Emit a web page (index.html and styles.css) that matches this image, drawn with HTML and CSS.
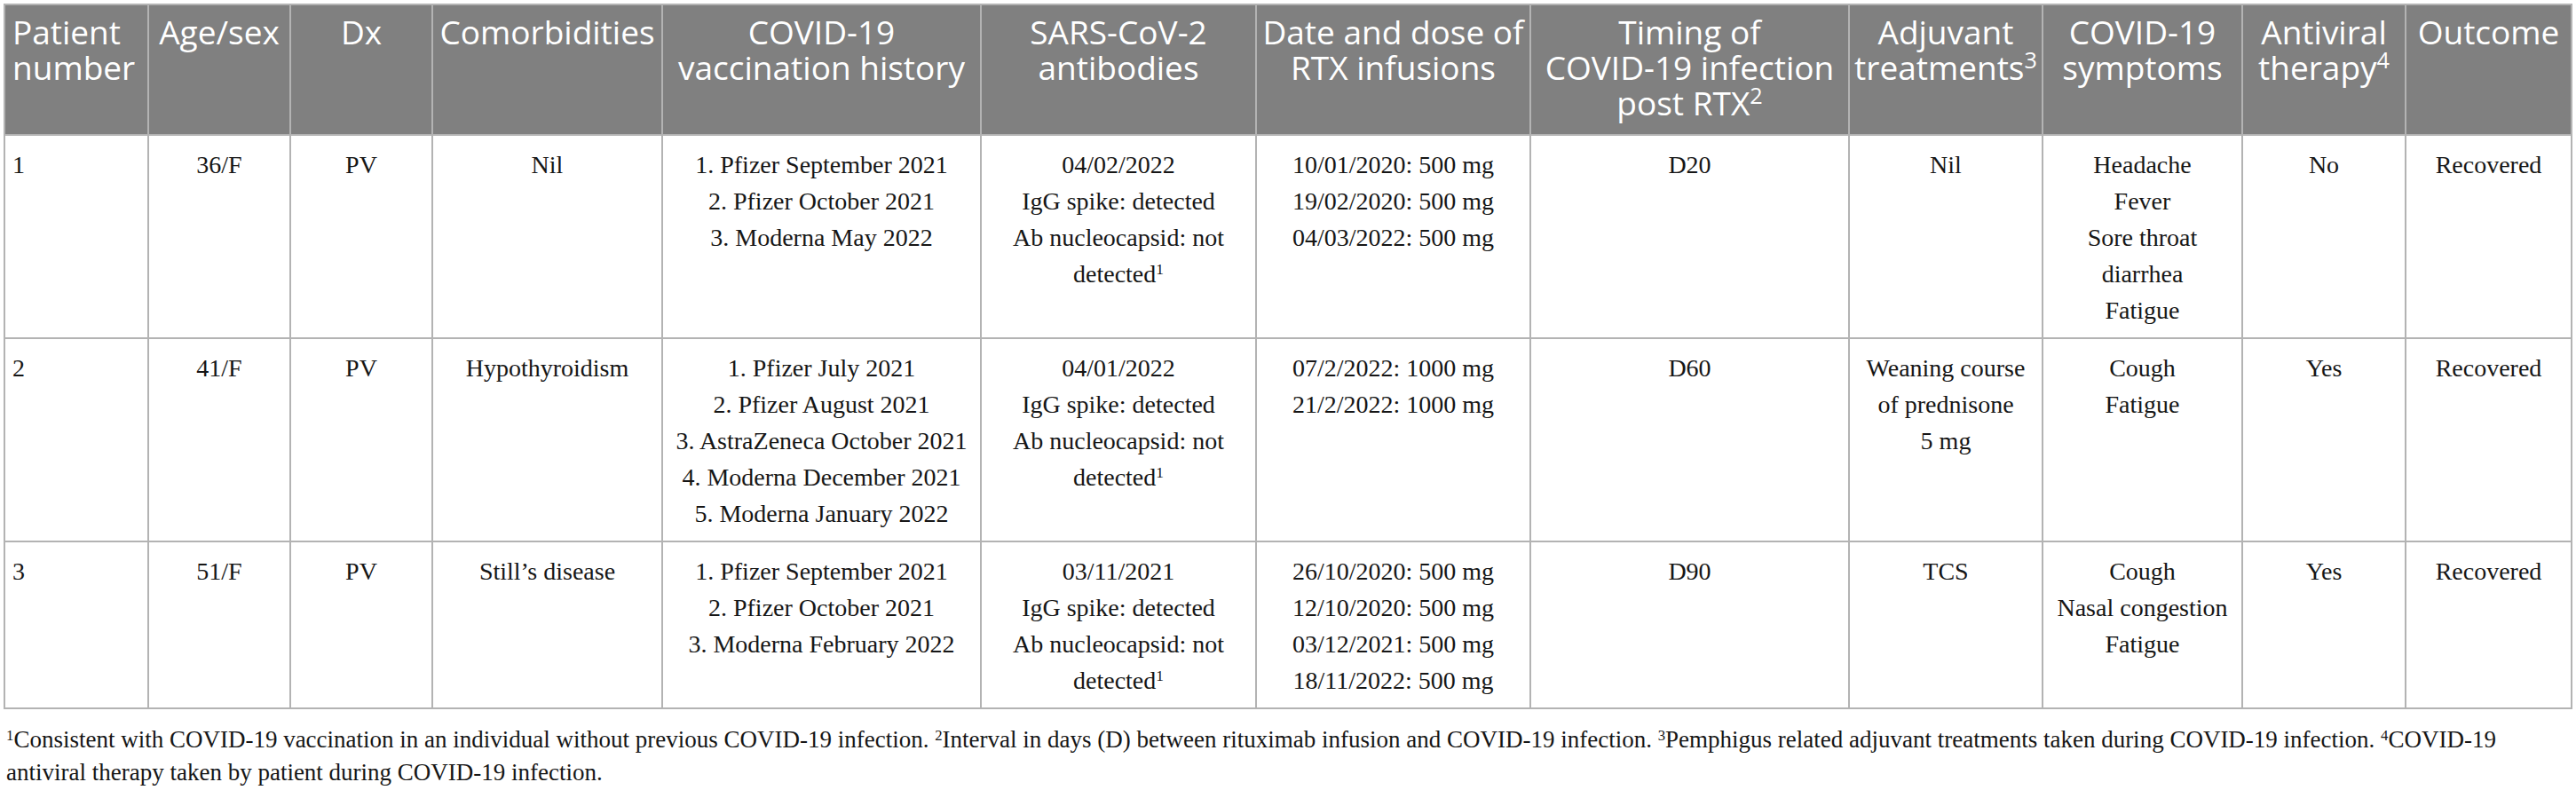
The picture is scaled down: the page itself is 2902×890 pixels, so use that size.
FILE: index.html
```html
<!DOCTYPE html>
<html lang="en">
<head>
  <meta charset="UTF-8" />
  <title>Patients with COVID-19 after rituximab</title>
  <link rel="stylesheet" href="styles.css">
</head>
<body>
  <table class="case-table">
    <colgroup>
      <col style="width: 162px">
      <col style="width: 160px">
      <col style="width: 160px">
      <col style="width: 259px">
      <col style="width: 359px">
      <col style="width: 310px">
      <col style="width: 309px">
      <col style="width: 359px">
      <col style="width: 218px">
      <col style="width: 225px">
      <col style="width: 184px">
      <col style="width: 187px">
    </colgroup>
    <thead>
      <tr>
        <th class="first">Patient<br>number</th>
        <th>Age/sex</th>
        <th>Dx</th>
        <th>Comorbidities</th>
        <th>COVID-19<br>vaccination history</th>
        <th>SARS-CoV-2<br>antibodies</th>
        <th>Date and dose of<br>RTX infusions</th>
        <th>Timing of<br>COVID-19 infection<br>post RTX<sup>2</sup></th>
        <th>Adjuvant<br>treatments<sup>3</sup></th>
        <th>COVID-19<br>symptoms</th>
        <th>Antiviral<br>therapy<sup>4</sup></th>
        <th>Outcome</th>
      </tr>
    </thead>
    <tbody>
      <tr>
        <td class="first">1</td>
        <td>36/F</td>
        <td>PV</td>
        <td>Nil</td>
        <td>1. Pfizer September 2021<br>2. Pfizer October 2021<br>3. Moderna May 2022</td>
        <td>04/02/2022<br>IgG spike: detected<br>Ab nucleocapsid: not<br>detected<sup>1</sup></td>
        <td>10/01/2020: 500 mg<br>19/02/2020: 500 mg<br>04/03/2022: 500 mg</td>
        <td>D20</td>
        <td>Nil</td>
        <td>Headache<br>Fever<br>Sore throat<br>diarrhea<br>Fatigue</td>
        <td>No</td>
        <td>Recovered</td>
      </tr>
      <tr>
        <td class="first">2</td>
        <td>41/F</td>
        <td>PV</td>
        <td>Hypothyroidism</td>
        <td>1. Pfizer July 2021<br>2. Pfizer August 2021<br>3. AstraZeneca October 2021<br>4. Moderna December 2021<br>5. Moderna January 2022</td>
        <td>04/01/2022<br>IgG spike: detected<br>Ab nucleocapsid: not<br>detected<sup>1</sup></td>
        <td>07/2/2022: 1000 mg<br>21/2/2022: 1000 mg</td>
        <td>D60</td>
        <td>Weaning course<br>of prednisone<br>5 mg</td>
        <td>Cough<br>Fatigue</td>
        <td>Yes</td>
        <td>Recovered</td>
      </tr>
      <tr>
        <td class="first">3</td>
        <td>51/F</td>
        <td>PV</td>
        <td>Still’s disease</td>
        <td>1. Pfizer September 2021<br>2. Pfizer October 2021<br>3. Moderna February 2022</td>
        <td>03/11/2021<br>IgG spike: detected<br>Ab nucleocapsid: not<br>detected<sup>1</sup></td>
        <td>26/10/2020: 500 mg<br>12/10/2020: 500 mg<br>03/12/2021: 500 mg<br>18/11/2022: 500 mg</td>
        <td>D90</td>
        <td>TCS</td>
        <td>Cough<br>Nasal congestion<br>Fatigue</td>
        <td>Yes</td>
        <td>Recovered</td>
      </tr>
    </tbody>
  </table>

  <div class="notes">
    <span class="note-line"><sup>1</sup>Consistent with COVID-19 vaccination in an individual without previous COVID-19 infection. <sup>2</sup>Interval in days (D) between rituximab infusion and COVID-19 infection. <sup>3</sup>Pemphigus related adjuvant treatments taken during COVID-19 infection. <sup>4</sup>COVID-19</span>
    <span class="note-line">antiviral therapy taken by patient during COVID-19 infection.</span>
  </div>
</body>
</html>
```

FILE: styles.css
```css
:root {
  --head-bg: #808080;
  --rule: #b3b3b3;
  --text: #161616;
}

body {
  margin: 0;
  padding: 4px 0 0 4px;
  background: #ffffff;
  color: var(--text);
  overflow: hidden;
}

.case-table {
  width: 2893px;
  table-layout: fixed;
  border-collapse: collapse;
  font-family: "Liberation Serif", "Times New Roman", serif;
  font-size: 28px;
  line-height: 41px;
}

.case-table th,
.case-table td {
  border: 2px solid var(--rule);
  text-align: center;
  vertical-align: top;
  padding: 12px 8px 10px 8px;
}

.case-table th {
  background-color: var(--head-bg);
  color: #ffffff;
  font-family: "Open Sans", "Noto Sans", sans-serif;
  font-weight: normal;
  font-size: 37px;
  line-height: 40px;
  padding: 10px 4px 15px 4px;
  white-space: nowrap;
}

.case-table .first {
  text-align: left;
}

.case-table th.first {
  padding-left: 8px;
}

sup {
  font-size: 0.62em;
  line-height: 0;
  vertical-align: 0.5em;
}

th sup {
  font-size: 0.68em;
}

.notes {
  margin: 16px 0 0 3px;
  font-family: "Liberation Serif", "Times New Roman", serif;
  font-size: 27px;
  line-height: 37px;
  color: var(--text);
}

.note-line {
  display: block;
  white-space: nowrap;
}
```
